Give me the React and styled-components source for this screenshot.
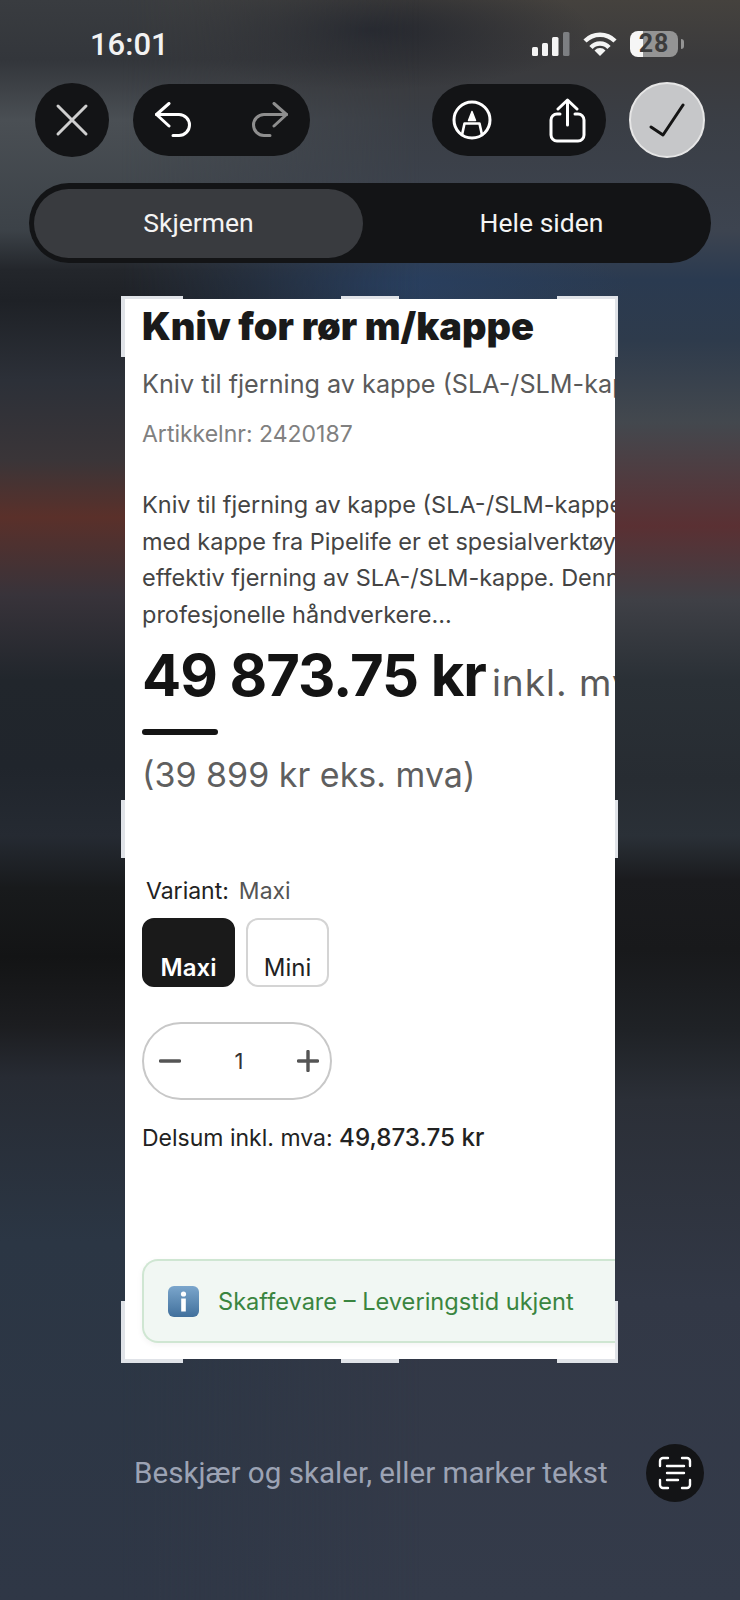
import React from "react";
import styled, { createGlobalStyle } from "styled-components";

const GlobalStyle = createGlobalStyle`
  html, body { margin: 0; padding: 0; background: #2f3846; }
  * { box-sizing: border-box; }
`;

const Screen = styled.div`
  position: relative;
  isolation: isolate;
  width: 740px;
  height: 1600px;
  overflow: hidden;
  display: flex;
  flex-direction: column;
  font-family: Roboto, "Liberation Sans", sans-serif;
  background:
    radial-gradient(ellipse 220px 60px at 370px 30px, rgba(28, 32, 42, 0.75), transparent),
    radial-gradient(ellipse 260px 50px at 370px 285px, rgba(40, 66, 104, 0.7), transparent),
    linear-gradient(180deg, #45423e 0, #3a3a3c 60px, #3a3e45 120px, #3d4450 230px, #2a3a50 280px, #2e3b4c 340px, #43484e 422px, #5a3033 526px, #3f4046 600px, #2a3036 680px, #272c32 780px, #2a3037 836px, #1a1b1e 880px, #18191b 950px, #1f2226 1030px, #2b2f37 1100px, #323846 1300px, #343b4a 1600px);

  /* left half of the blurred backdrop has its own colour bands */
  &::before {
    content: "";
    position: absolute;
    inset: 0;
    z-index: -1;
    background: linear-gradient(180deg, #393c40 0, #33363b 60px, #4a4f54 120px, #3c4248 230px, #23262b 270px, #1e2126 300px, #2c3038 380px, #3a3538 460px, #5a302a 517px, #38333a 595px, #21262c 680px, #20252c 767px, #252a32 836px, #181a1c 888px, #131415 957px, #1c1d20 1026px, #272b33 1077px, #2b3644 1241px, #2f3746 1600px);
    mask-image: linear-gradient(90deg, #000 0, #000 120px, transparent 420px);
  }
`;

const StatusBar = styled.div`
  height: 82px;
  padding: 27px 62px 0 90px;
  display: flex;
  justify-content: space-between;
  align-items: flex-start;
`;

const Time = styled.div`
  color: #f2f2f2;
  font-size: 31px;
  font-weight: 500;
  line-height: 36px;
`;

const StatusIcons = styled.div`
  display: flex;
  align-items: center;
  gap: 13px;
  height: 36px;
  margin-top: -1px;
`;

const Battery = styled.div`
  position: relative;
  width: 48px;
  height: 26px;
  border-radius: 8px;
  background: linear-gradient(90deg, #f6f6f6 0 27%, #949494 27% 100%);
  color: #3c3c3c;
  font-size: 25px;
  font-weight: 700;
  line-height: 26px;
  letter-spacing: 1px;
  text-align: center;
  &::after {
    content: "";
    position: absolute;
    right: -6px;
    top: 8px;
    width: 3px;
    height: 10px;
    border-radius: 0 3px 3px 0;
    background: #949494;
  }
`;

const Toolbar = styled.div`
  height: 76px;
  padding: 0 35px;
  display: flex;
  align-items: center;
`;

const CircleButton = styled.div`
  width: ${(p) => (p.$light ? 76 : 74)}px;
  height: ${(p) => (p.$light ? 76 : 74)}px;
  margin-left: ${(p) => (p.$light ? 23 : 0)}px;
  border-radius: 50%;
  border: ${(p) => (p.$light ? "2px solid #e6e6e6" : "0")};
  background: ${(p) => (p.$light ? "#c6c7c9" : "#131416")};
  display: flex;
  align-items: center;
  justify-content: center;
`;

const Pill = styled.div`
  width: ${(p) => p.$width}px;
  height: 72px;
  margin-left: ${(p) => p.$left}px;
  margin-right: ${(p) => p.$right || 0}px;
  border-radius: 36px;
  background: #131416;
  display: flex;
  align-items: center;
  justify-content: space-between;
  padding: 0 ${(p) => p.$pad}px;
`;

const Segmented = styled.div`
  margin: 25px 29px 0;
  height: 80px;
  border-radius: 40px;
  background: #131416;
  padding: 6px 5px;
  display: flex;
`;

const Segment = styled.div`
  width: ${(p) => (p.$active ? 329 : 343)}px;
  height: 69px;
  padding-left: ${(p) => (p.$active ? 0 : 14)}px;
  border-radius: 35px;
  background: ${(p) => (p.$active ? "#393b3f" : "transparent")};
  color: #f4f4f4;
  font-size: 26.5px;
  line-height: 67px;
  text-align: center;
`;

const CropArea = styled.div`
  position: relative;
  margin: 36px 125px 0;
  width: 490px;
  height: 1060px;
  background: #fff;
`;

const Page = styled.div`
  width: 100%;
  height: 100%;
  overflow: hidden;
  padding: 0 0 0 17px;
  font-family: Inter, sans-serif;
  white-space: nowrap;
`;

const Title = styled.h1`
  margin: 5px 0 0;
  color: #1a1a1a;
  font-size: 38px;
  font-weight: 900;
  line-height: 44px;
`;

const Subtitle = styled.p`
  margin: 21px 0 0;
  color: #5a5a5a;
  font-size: 25.2px;
  line-height: 30px;
`;

const Sku = styled.p`
  margin: 20px 0 0;
  color: #808080;
  font-size: 23px;
  line-height: 30px;
`;

const Description = styled.p`
  margin: 38px 0 0;
  color: #444;
  font-size: 23.5px;
  line-height: 36.5px;
`;

const PriceRow = styled.div`
  margin-top: 9px;
  display: flex;
  align-items: baseline;
  gap: 6px;
  height: 66px;
`;

const Price = styled.span`
  color: #141414;
  font-size: 58px;
  font-weight: 700;
  letter-spacing: -1.05px;
  line-height: 66px;
`;

const PriceSuffix = styled.span`
  color: #5a5a5a;
  font-size: 37px;
  letter-spacing: 1px;
`;

const Rule = styled.div`
  margin-top: 21px;
  width: 76px;
  height: 6px;
  border-radius: 3px;
  background: #141414;
`;

const NetPrice = styled.p`
  margin: 17px 0 0;
  color: #5f5f5f;
  font-size: 34px;
  line-height: 46px;
`;

const VariantLabel = styled.div`
  margin: 78px 0 0 4px;
  color: #555;
  font-size: 23px;
  line-height: 30px;
  b {
    color: #222;
    font-weight: 400;
    margin-right: 10px;
  }
`;

const VariantRow = styled.div`
  margin-top: 12px;
  display: flex;
  gap: 11px;
`;

const VariantButton = styled.div`
  width: ${(p) => p.$width}px;
  height: 69px;
  padding-top: 34px;
  border-radius: 12px;
  border: 2px solid ${(p) => (p.$active ? "#1a1a1a" : "#d4d4d4")};
  background: ${(p) => (p.$active ? "#1a1a1a" : "#fff")};
  color: ${(p) => (p.$active ? "#fff" : "#222")};
  font-size: 24px;
  font-weight: ${(p) => (p.$active ? 600 : 400)};
  line-height: 28px;
  text-align: center;
`;

const Stepper = styled.div`
  margin-top: 35px;
  width: 190px;
  height: 78px;
  border: 2px solid #c8c8c8;
  border-radius: 39px;
  padding: 0 11px 0 15px;
  display: flex;
  align-items: center;
  justify-content: space-between;
  color: #333;
  font-size: 22px;
`;

const Subtotal = styled.div`
  margin-top: 22px;
  color: #222;
  font-size: 23px;
  line-height: 32px;
  b {
    font-weight: 500;
    font-size: 24.2px;
  }
`;

const Notice = styled.div`
  margin-top: 105px;
  width: 500px;
  height: 84px;
  border: 2px solid #cfe6d2;
  border-right: 0;
  border-radius: 16px 0 0 16px;
  background: #f1f7f3;
  box-shadow: 0 2px 6px rgba(0, 0, 0, 0.05);
  padding-left: 24px;
  display: flex;
  align-items: center;
  gap: 19px;
  color: #3a8540;
  font-size: 23.6px;
`;

const Handle = styled.div`
  position: absolute;
  background: #e0e3e8;
  ${(p) => p.$place}
`;

const Footer = styled.div`
  margin-top: 85px;
  padding: 0 36px 0 134px;
  display: flex;
  align-items: center;
  justify-content: space-between;
`;

const Hint = styled.div`
  color: #9ca3b4;
  font-size: 29.6px;
`;

const TextScan = styled.div`
  width: 58px;
  height: 58px;
  border-radius: 50%;
  background: #131416;
  display: flex;
  align-items: center;
  justify-content: center;
`;

const handles = [
  "left:-4px;top:-3px;width:62px;height:3px;",
  "left:-4px;top:-3px;width:4px;height:61px;",
  "left:216px;top:-3px;width:58px;height:3px;",
  "right:-3px;top:-3px;width:61px;height:3px;",
  "right:-3px;top:-3px;width:3px;height:61px;",
  "left:-4px;top:501px;width:4px;height:58px;",
  "right:-3px;top:501px;width:3px;height:58px;",
  "left:-4px;bottom:-4px;width:62px;height:4px;",
  "left:-4px;bottom:-4px;width:4px;height:62px;",
  "left:216px;bottom:-4px;width:58px;height:4px;",
  "right:-3px;bottom:-4px;width:61px;height:4px;",
  "right:-3px;bottom:-4px;width:3px;height:62px;",
];

const Stroke = ({ w = 40, h = 40, color = "#fff", width = 3, children }) => (
  <svg width={w} height={h} viewBox={`0 0 ${w} ${h}`} fill="none" stroke={color} strokeWidth={width} strokeLinecap="round" strokeLinejoin="round">
    {children}
  </svg>
);

export default function App() {
  return (
    <Screen>
      <GlobalStyle />
      <StatusBar>
        <Time>16:01</Time>
        <StatusIcons>
          <svg width="38" height="24" viewBox="0 0 38 24">
            <rect x="0" y="15" width="6" height="9" rx="1.5" fill="#f4f4f4" />
            <rect x="10" y="11" width="6" height="13" rx="1.5" fill="#f4f4f4" />
            <rect x="20" y="5" width="6.5" height="19" rx="1.5" fill="#f4f4f4" />
            <rect x="31" y="0" width="6.5" height="24" rx="1.5" fill="#7d7f82" />
          </svg>
          <svg width="34" height="24" viewBox="0 0 34 24" fill="none" stroke="#f4f4f4" strokeWidth="4.4">
            <path d="M2 9 A 21 21 0 0 1 32 9" />
            <path d="M8 15.5 A 12 12 0 0 1 26 15.5" />
            <path d="M17 24 L11.5 18.5 A 7.5 7.5 0 0 1 22.5 18.5 Z" fill="#f4f4f4" stroke="none" />
          </svg>
          <Battery>28</Battery>
        </StatusIcons>
      </StatusBar>
      <Toolbar>
        <CircleButton>
          <Stroke color="#cfcfcf">
            <path d="M6 6 L34 34 M34 6 L6 34" />
          </Stroke>
        </CircleButton>
        <Pill $width={177} $left={24} $right={122} $pad={22}>
          <Stroke w={36} h={36}>
            <path d="M14 1.5 L1.5 12.5 L14 24" />
            <path d="M1.5 12.5 H24 A 10.5 10.5 0 0 1 24 33.5 H18" />
          </Stroke>
          <Stroke w={36} h={36} color="#8e8e8e">
            <path d="M22 1.5 L34.5 12.5 L22 24" />
            <path d="M34.5 12.5 H12 A 10.5 10.5 0 0 0 12 33.5 H18" />
          </Stroke>
        </Pill>
        <Pill $width={174} $left={0} $pad={20}>
          <Stroke>
            <circle cx="20" cy="20" r="18" />
            <path d="M20 11.5 L16.5 20.5 H23.5 Z" fill="#fff" strokeWidth="1.5" />
            <path d="M10 35 L12.5 23.5 H27.5 L30 35" strokeWidth="2.6" />
          </Stroke>
          <Stroke w={37} h={45}>
            <path d="M18.5 2 V27 M9 11 L18.5 2 L28 11" />
            <path d="M11 16 H8 A 6 6 0 0 0 2 22 V37 A 6 6 0 0 0 8 43 H29 A 6 6 0 0 0 35 37 V22 A 6 6 0 0 0 29 16 H26" />
          </Stroke>
        </Pill>
        <CircleButton $light>
          <Stroke w={36} h={34} color="#141414">
            <path d="M2 24 L14 32 L34 2" />
          </Stroke>
        </CircleButton>
      </Toolbar>
      <Segmented>
        <Segment $active>Skjermen</Segment>
        <Segment>Hele siden</Segment>
      </Segmented>
      <CropArea>
        <Page>
          <Title>Kniv for rør m/kappe</Title>
          <Subtitle>Kniv til fjerning av kappe (SLA-/SLM-kappe)</Subtitle>
          <Sku>Artikkelnr: 2420187</Sku>
          <Description>
            Kniv til fjerning av kappe (SLA-/SLM-kappe)
            <br />
            med kappe fra Pipelife er et spesialverktøy for
            <br />
            effektiv fjerning av SLA-/SLM-kappe. Denne
            <br />
            profesjonelle håndverkere...
          </Description>
          <PriceRow>
            <Price>49 873.75 kr</Price>
            <PriceSuffix>inkl. mva</PriceSuffix>
          </PriceRow>
          <Rule />
          <NetPrice>(39 899 kr eks. mva)</NetPrice>
          <VariantLabel>
            <b>Variant:</b>Maxi
          </VariantLabel>
          <VariantRow>
            <VariantButton $active $width={93}>Maxi</VariantButton>
            <VariantButton $width={83}>Mini</VariantButton>
          </VariantRow>
          <Stepper>
            <Stroke w={22} h={22} color="#555" width={3.4}>
              <path d="M1.5 11 H20.5" />
            </Stroke>
            <span>1</span>
            <Stroke w={22} h={22} color="#555" width={3.4}>
              <path d="M1.5 11 H20.5 M11 1.5 V20.5" />
            </Stroke>
          </Stepper>
          <Subtotal>
            Delsum inkl. mva: <b>49,873.75 kr</b>
          </Subtotal>
          <Notice>
            <svg width="31" height="31" viewBox="0 0 31 31">
              <defs>
                <linearGradient id="infoFill" x1="0" y1="0" x2="0" y2="1">
                  <stop offset="0" stopColor="#7ba6cc" />
                  <stop offset="1" stopColor="#41709c" />
                </linearGradient>
              </defs>
              <rect width="31" height="31" rx="6" fill="url(#infoFill)" />
              <circle cx="15.5" cy="8" r="2.6" fill="#fff" />
              <rect x="13.2" y="12.5" width="4.6" height="13" fill="#fff" />
            </svg>
            Skaffevare – Leveringstid ukjent
          </Notice>
        </Page>
        {handles.map((place) => (
          <Handle key={place} $place={place} />
        ))}
      </CropArea>
      <Footer>
        <Hint>Beskjær og skaler, eller marker tekst</Hint>
        <TextScan>
          <Stroke w={34} h={34} width={2.4}>
            <path d="M2 10 V5 A 3 3 0 0 1 5 2 H10 M24 2 H29 A 3 3 0 0 1 32 5 V10 M2 24 V29 A 3 3 0 0 0 5 32 H10 M24 32 H29 A 3 3 0 0 0 32 29 V24" />
            <path d="M9 10 H26 M9 17 H26 M9 24 H20" />
          </Stroke>
        </TextScan>
      </Footer>
    </Screen>
  );
}
